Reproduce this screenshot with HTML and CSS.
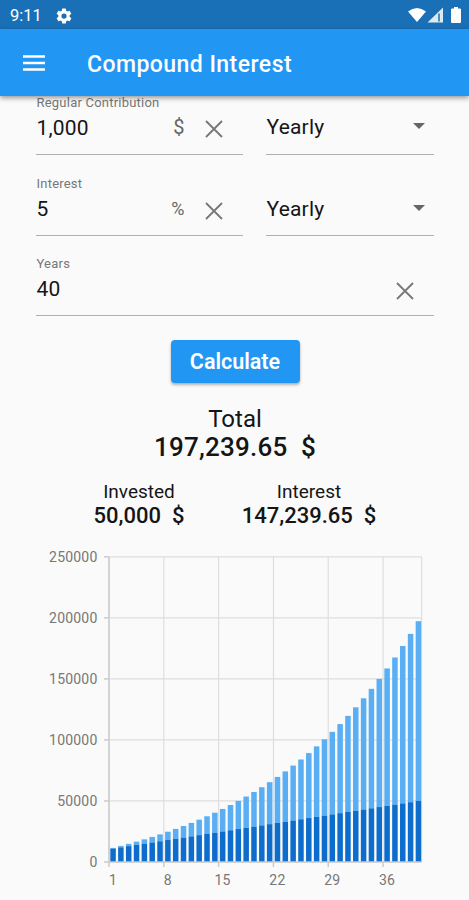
FILE: index.html
```html
<!DOCTYPE html>
<html lang="en">
<head>
<meta charset="utf-8">
<title>Compound Interest</title>
<link rel="stylesheet" href="styles.css">
</head>
<body>
<div class="status">
  <span class="clock">9:11</span>
  <svg class="gear" width="18" height="18" viewBox="0 0 24 24"><path fill="#fff" d="M19.4 13a7.500 7.500 0 0 0 0-2l2.100-1.650c.2-.15.25-.4.12-.64l-2-3.460a.5.5 0 0 0-.6-.22l-2.500 1a7.300 7.300 0 0 0-1.700-1l-.38-2.650A.5.5 0 0 0 14 2h-4a.5.500 0 0 0-.5.420L9.130 5.070a7.700 7.700 0 0 0-1.700 1l-2.480-1a.5.5 0 0 0-.61.220l-2 3.460a.5.5 0 0 0 .12.640L4.570 11a7.900 7.900 0 0 0 0 2l-2.110 1.650a.5.5 0 0 0-.12.640l2 3.460c.12.220.39.300.61.220l2.480-1a7.300 7.300 0 0 0 1.700 1l.37 2.650c.04.240.25.420.5.420h4c.25 0 .46-.18.490-.42l.38-2.650a7.700 7.700 0 0 0 1.690-1l2.490 1c.23.090.49 0 .61-.22l2-3.460a.5.5 0 0 0-.12-.64zM12 15.500a3.500 3.500 0 1 1 0-7 3.500 3.500 0 0 1 0 7z"/></svg>
  <svg class="signals" width="54" height="18" viewBox="0 0 54 18"><path fill="#fff" d="M0 4.500Q9 -2.500 18 4.500L9 15z"/><path fill="#fff" fill-opacity=".85" d="M19.500 15.500L35 .5v15z"/><path fill="none" stroke="#1b6fb5" stroke-width="1.500" d="M31 6.500v8"/><path fill="#fff" d="M44 1.500h2V0h4v1.500h2q1 0 1 1V15q0 1-1 1h-8q-1 0-1-1V2.500q0-1 1-1z"/></svg>
</div>
<header class="appbar">
  <svg width="22" height="16" viewBox="0 0 22 16"><path stroke="#fff" stroke-width="2.300" d="M0 1.500h22M0 8h22M0 14.500h22"/></svg>
  <h1>Compound Interest</h1>
</header>
<main>
  <form class="form">
    <div class="field first">
      <label>Regular Contribution</label>
      <div class="row"><span class="value">1,000</span><span class="unit">$</span><svg class="clear" width="18" height="18" viewBox="0 0 18 18"><path d="M1 1l16 16M17 1L1 17"/></svg></div>
    </div>
    <div class="field select first">
      <div class="row"><span class="value">Yearly</span><i class="caret"></i></div>
    </div>
    <div class="field second">
      <label>Interest</label>
      <div class="row"><span class="value">5</span><span class="unit percent">%</span><svg class="clear" width="18" height="18" viewBox="0 0 18 18"><path d="M1 1l16 16M17 1L1 17"/></svg></div>
    </div>
    <div class="field select second">
      <div class="row"><span class="value">Yearly</span><i class="caret"></i></div>
    </div>
    <div class="field wide">
      <label>Years</label>
      <div class="row"><span class="value">40</span><svg class="clear" width="18" height="18" viewBox="0 0 18 18"><path d="M1 1l16 16M17 1L1 17"/></svg></div>
    </div>
  </form>
  <button class="calculate">Calculate</button>
  <section class="total"><span>Total</span><strong>197,239.65&nbsp; $</strong></section>
  <section class="parts">
    <div class="invested"><span>Invested</span><strong>50,000&nbsp; $</strong></div>
    <div class="interest"><span>Interest</span><strong>147,239.65&nbsp; $</strong></div>
  </section>
  <svg class="chart" id="chart" width="469" height="350" viewBox="0 550 469 350"></svg>
</main>
<script src="chart.js"></script>
</body>
</html>
```
FILE: styles.css
```css
* { box-sizing: border-box; }
body {
  margin: 0;
  width: 469px;
  height: 900px;
  overflow: hidden;
  background: #fafafa;
  color: #151515;
  font-family: Roboto, "Liberation Sans", sans-serif;
}
.status {
  height: 29px;
  display: flex;
  align-items: center;
  padding: 2px 7px 0 10px;
  background: #1a70b7;
  color: #fff;
}
.clock { font-size: 16.500px; line-height: 20px; width: 45px; }
.signals { margin-left: auto; }
.appbar {
  position: relative;
  height: 67px;
  display: flex;
  align-items: center;
  gap: 42px;
  padding: 1px 23px 0;
  background: #2196f3;
  color: #fff;
  box-shadow: 0 2px 5px rgba(0, 0, 0, .4);
}
h1 { margin: 0; padding-top: 2px; font-size: 23px; font-weight: 500; letter-spacing: .45px; }
.form {
  display: grid;
  grid-template-columns: 206.500px 168px;
  grid-template-rows: 59px 81px 80px;
  column-gap: 23.500px;
  padding-left: 36px;
}
.field {
  display: flex;
  flex-direction: column;
  justify-content: flex-end;
  border-bottom: 1px solid #b0b0b0;
}
.wide { grid-column: 1 / 3; }
.field label { font-size: 13px; line-height: 16px; color: #777; letter-spacing: .22px; padding-left: .5px; }
.row { height: 43px; display: flex; align-items: flex-start; padding: 5px 0 0 .5px; }
.first .row { height: 44px; }
.first label { margin-top: -1px; }
.value { font-size: 21px; line-height: 24px; flex: 1; letter-spacing: .2px; }
.unit { font-size: 20px; line-height: 24px; color: #666; margin-right: 20px; }
.first .unit { margin-top: -1px; }
.percent { font-size: 18px; }
.clear { margin: 5px 20px 0 0; fill: none; stroke: #777; stroke-width: 1.800; }
.first .clear { margin-top: 4px; }
.caret {
  margin: 8px 9px 0 0;
  border: 6px solid transparent;
  border-top-color: #666;
  border-bottom: 0;
}
.calculate {
  display: block;
  width: 129px;
  height: 43px;
  margin: 24px 0 0 170.500px;
  padding: 0;
  border: 0;
  border-radius: 4px;
  background: #2196f3;
  color: #fff;
  font: 600 21.500px/43px Roboto, sans-serif;
  box-shadow: 0 2px 3px rgba(0, 0, 0, .3);
}
.total {
  margin-top: 22px;
  height: 56px;
  display: flex;
  flex-direction: column;
  align-items: center;
  padding-left: 1px;
  font-size: 24px;
  line-height: 28px;
}
.total strong { font-size: 26px; letter-spacing: .25px; }
strong { font-weight: 500; white-space: pre; }
.parts {
  display: flex;
  margin-top: 19px;
  height: 70px;
  font-size: 19px;
  line-height: 24px;
}
.parts div { display: flex; flex-direction: column; align-items: center; }
.parts strong { font-size: 22px; }
.invested { width: 140px; margin-left: 69px; }
.interest { width: 160px; margin-left: 20px; }
.chart { display: block; }
.grid { stroke: #dedede; stroke-width: 1.200; }
.axis { stroke: #cbcbcb; stroke-width: 1.500; }
.tick { fill: #777; font-size: 14px; letter-spacing: .2px; }
.gain { fill: #5aaff4; }
.paid { fill: #0d6dcd; }
```
FILE: chart.js
```js
const svg = document.getElementById("chart");
const left = 109, right = 421.6, top0 = 556.8, bottom = 862, pitch = 7.83;

function add(tag, attrs, text) {
  const el = document.createElementNS("http://www.w3.org/2000/svg", tag);
  for (const key in attrs) el.setAttribute(key, attrs[key]);
  if (text !== undefined) el.textContent = text;
  svg.appendChild(el);
}
const yOf = v => bottom - v / 250000 * (bottom - top0);

for (let v = 0; v <= 250000; v += 50000) {
  const y = yOf(v);
  add("line", { class: "grid", x1: left, x2: right, y1: y, y2: y });
  add("line", { class: "axis", x1: left - 5, x2: left, y1: y, y2: y });
  add("text", { class: "tick", x: 97.500, y: y + 5, "text-anchor": "end" }, v);
}
for (let n = 1; n <= 36; n += 7) {
  const x = left + (n - 1) * pitch;
  add("line", { class: "grid", x1: x, x2: x, y1: top0, y2: bottom });
  add("line", { class: "axis", x1: x, x2: x, y1: bottom, y2: bottom + 5 });
  add("text", { class: "tick", x: x + 4, y: 885, "text-anchor": "middle" }, n);
}
add("line", { class: "grid", x1: right, x2: right, y1: top0, y2: bottom });

// Balance grows 5% a year, with 1,000 added at the start of each year.
let balance = 10000;
for (let n = 1; n <= 40; n++) {
  balance = (balance + 1000) * 1.05;
  const paid = 10000 + n * 1000;
  const x = left + 1.300 + (n - 1) * pitch;
  add("rect", { class: "gain", x, y: yOf(balance), width: 5.500, height: yOf(paid) - yOf(balance) });
  add("rect", { class: "paid", x, y: yOf(paid), width: 5.500, height: bottom - yOf(paid) });
}
add("line", { class: "axis", x1: left, x2: left, y1: top0, y2: bottom });
add("line", { class: "axis", x1: left, x2: right, y1: bottom, y2: bottom });
```
